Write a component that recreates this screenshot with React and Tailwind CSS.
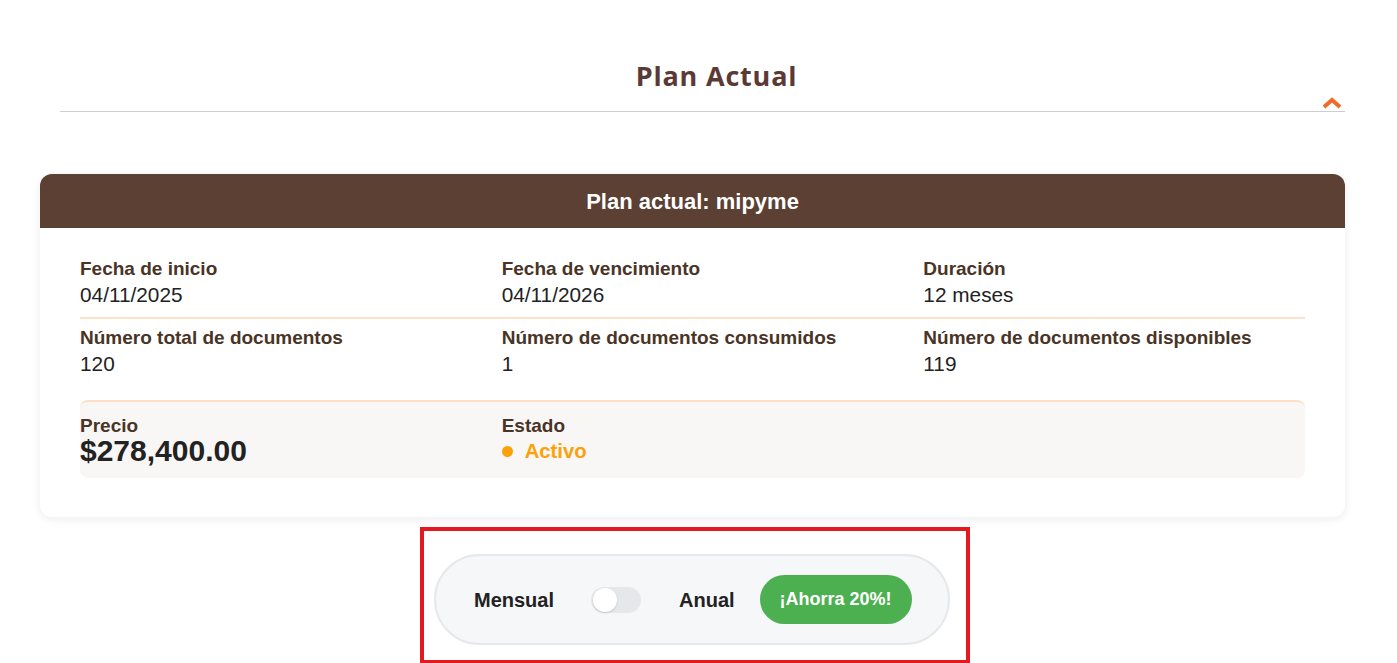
export default function App() {
  const sans = { fontFamily: '"Liberation Sans", Arial, sans-serif' };
  const Field = ({ label, value }) => (
    <div className="flex flex-col">
      <span className="text-[19px] font-bold leading-[24px] text-[#4a3426] whitespace-nowrap">{label}</span>
      <span className="text-[20.8px] leading-[28px] text-[#222]">{value}</span>
    </div>
  );
  return (
    <div className="w-[1397px] h-[663px] bg-white overflow-hidden" style={sans}>
      <div className="pt-[57px]">
        <h1
          className="pl-[36px] text-center text-[27px] font-bold leading-[38px] text-[#5b3a36] tracking-[0.8px]"
          style={{ fontFamily: '"Open Sans", sans-serif' }}
        >
          Plan Actual
        </h1>
        <div className="relative ml-[60px] mr-[52px] mt-[16px] border-b border-[#cfcfcf]">
          <svg className="absolute right-[3px] -top-[14px]" width="20" height="12" viewBox="0 0 20 12">
            <path d="M2 10 L10 3 L18 10" fill="none" stroke="#f26a2a" strokeWidth="4" strokeLinejoin="miter" />
          </svg>
        </div>
      </div>

      <div className="ml-[40px] mr-[52px] mt-[62px] rounded-[12px] bg-white shadow-[0_2px_10px_rgba(0,0,0,0.08)]">
        <div className="h-[54px] rounded-t-[12px] bg-[#5b4033] flex items-center justify-center">
          <span className="text-white text-[22px] font-bold">Plan actual: mipyme</span>
        </div>
        <div className="px-[40px] pt-[29px] pb-[39px]">
          <div className="grid grid-cols-3 gap-x-[40px]">
            <Field label="Fecha de inicio" value="04/11/2025" />
            <Field label="Fecha de vencimiento" value="04/11/2026" />
            <Field label="Duración" value="12 meses" />
          </div>
          <div className="mt-[8px] border-t-2 border-[#fde3c8]" />
          <div className="grid grid-cols-3 gap-x-[40px] mt-[7px]">
            <Field label="Número total de documentos" value="120" />
            <Field label="Número de documentos consumidos" value="1" />
            <Field label="Número de documentos disponibles" value="119" />
          </div>
          <div className="mt-[22px] h-[78px] rounded-[8px] border-t-2 border-[#fde0c4] bg-[#f9f7f6] grid grid-cols-3 gap-x-[40px] pt-[12px]">
            <div className="flex flex-col">
              <span className="text-[19px] font-bold leading-[24px] text-[#4a3426]">Precio</span>
              <span className="text-[30px] font-bold leading-[26px] text-[#222]">$278,400.00</span>
            </div>
            <div className="flex flex-col">
              <span className="text-[19px] font-bold leading-[24px] text-[#4a3426]">Estado</span>
              <span className="flex items-center">
                <span className="w-[11px] h-[11px] rounded-full bg-[#fba20a]" />
                <span className="ml-[12px] text-[20.3px] font-bold leading-[26px] text-[#fba20a]">Activo</span>
              </span>
            </div>
            <div />
          </div>
        </div>
      </div>

      <div className="ml-[420px] w-[550px] h-[137px] mt-[10px] border-4 border-[#e3191f] flex items-start pt-[23px] pl-[10px]">
        <div className="w-[516px] h-[91px] rounded-full bg-[#f6f7f9] border-2 border-[#e6e8ec] flex items-center pl-[38px]">
          <span className="text-[20px] font-bold text-[#222]">Mensual</span>
          <span className="ml-[37px] w-[50px] h-[26px] rounded-full bg-[#e5e7eb] flex items-center px-[2px]">
            <span className="w-[24px] h-[24px] rounded-full bg-white shadow-[0_1px_2px_rgba(0,0,0,0.15)]" />
          </span>
          <span className="ml-[38px] text-[20px] font-bold text-[#222]">Anual</span>
          <span className="ml-[25px] w-[152px] h-[49px] rounded-full bg-[#4caf50] flex items-center justify-center text-white text-[18px] font-bold">
            ¡Ahorra 20%!
          </span>
        </div>
      </div>
    </div>
  );
}
